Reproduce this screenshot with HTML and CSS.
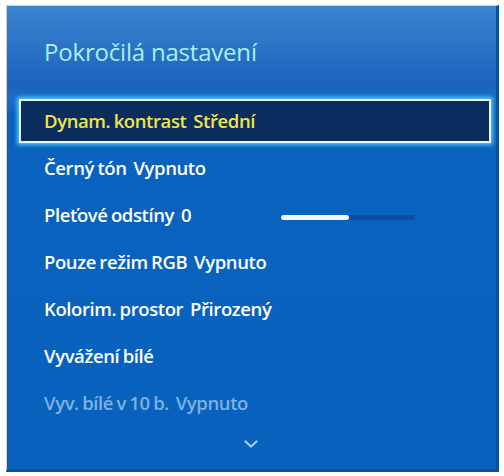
FILE: index.html
```html
<!DOCTYPE html>
<html lang="cs">
<head>
<meta charset="utf-8">
<link rel="stylesheet" href="styles.css">
</head>
<body>
<div class="panel">
  <div class="title">Pokročilá nastavení</div>
  <ul class="menu">
    <li class="row selected"><span class="box">Dynam. kontrast&nbsp; Střední</span></li>
    <li class="row">Černý tón&nbsp; Vypnuto</li>
    <li class="row"><span class="label">Pleťové odstíny&nbsp; 0</span><span class="slider"><span class="fill" style="width:51%"></span></span></li>
    <li class="row">Pouze režim RGB&nbsp; Vypnuto</li>
    <li class="row">Kolorim. prostor&nbsp; Přirozený</li>
    <li class="row">Vyvážení bílé</li>
    <li class="row disabled">Vyv. bílé v 10 b.&nbsp; Vypnuto</li>
  </ul>
  <div class="more">
    <svg width="14" height="9" viewBox="0 0 14 9"><polyline points="1.5,1.5 7,6.5 12.5,1.5" fill="none" stroke="#a9cdf2" stroke-width="2.2" stroke-linecap="round" stroke-linejoin="round"/></svg>
  </div>
</div>
</body>
</html>
```

FILE: styles.css
```css
html, body {
  margin: 0;
  padding: 0;
  background: #ffffff;
}
body {
  width: 504px;
  height: 476px;
  overflow: hidden;
  font-family: "Open Sans", "Liberation Sans", sans-serif;
}
.panel {
  box-sizing: border-box;
  margin: 5px 0 0 6px;
  width: 493px;
  height: 467px;
  border-top: 1px solid #c9d3e0;
  border-left: 1px solid #c9cfd8;
  border-right: 3px solid #0d4f98;
  border-bottom: 3px solid #0d4f98;
  background: linear-gradient(180deg, #3d82cf 0px, #2c73c7 40px, #1b63bc 78px, #1e6cc6 92px, #0a62bd 108px, #0862bd 100%);
  display: flex;
  flex-direction: column;
}
.title {
  height: 91px;
  box-sizing: border-box;
  padding: 31px 0 0 37px;
  font-size: 24px;
  font-weight: 500;
  line-height: 30px;
  color: #a9eef2;
  letter-spacing: -0.2px;
}
.menu {
  list-style: none;
  margin: 0;
  padding: 0;
}
.row {
  height: 47px;
  display: flex;
  align-items: center;
  padding-left: 37px;
  font-size: 18.5px;
  font-weight: 600;
  color: #ffffff;
  letter-spacing: -0.4px;
  word-spacing: -1px;
}
.row.selected {
  padding: 0 5px 0 12px;
}
.box {
  flex: 1;
  height: 44px;
  box-sizing: border-box;
  display: flex;
  align-items: center;
  padding-left: 23px;
  border: 2px solid #eaf8ff;
  background: #0a2d5e;
  box-shadow: 0 0 4px 2px #53c6ff;
  color: #f0e44a;
}
.label {
  width: 237px;
}
.slider {
  width: 134px;
  height: 5px;
  margin-top: 5px;
  background: #0d4e9e;
  border-radius: 1px;
  display: flex;
}
.fill {
  display: block;
  height: 100%;
  background: #f4f8ff;
  border-radius: 3px;
}
.row.disabled {
  color: #7eb1e4;
}
.more {
  display: flex;
  justify-content: center;
  padding-top: 14px;
  padding-right: 2px;
}
```
